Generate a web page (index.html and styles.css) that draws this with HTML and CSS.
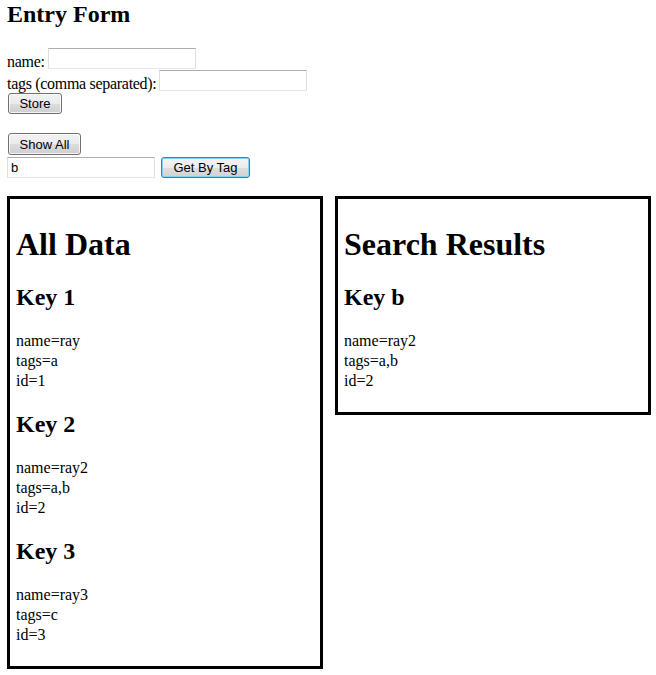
FILE: index.html
```html
<!DOCTYPE html>
<html>
<head>
<meta charset="utf-8">
<title>Entry Form</title>
<link rel="stylesheet" href="styles.css">
</head>
<body>
<h2 class="title">Entry Form</h2>
<div class="form">
  <div class="row"><span class="label">name:</span><input class="field" type="text"></div>
  <div class="row"><span class="label">tags (comma separated):</span><input class="field" type="text"></div>
  <button class="btn btn-store" type="button">Store</button>
</div>
<div class="search">
  <button class="btn btn-all" type="button">Show All</button>
  <div class="search-row">
    <input class="field" type="text" value="b">
    <button class="btn btn-tag" type="button">Get By Tag</button>
  </div>
</div>
<div class="boxes">
  <div class="box">
    <h1>All Data</h1>
    <h2>Key 1</h2>
    <p class="rec">name=ray<br>tags=a<br>id=1</p>
    <h2>Key 2</h2>
    <p class="rec">name=ray2<br>tags=a,b<br>id=2</p>
    <h2>Key 3</h2>
    <p class="rec">name=ray3<br>tags=c<br>id=3</p>
  </div>
  <div class="box">
    <h1>Search Results</h1>
    <h2>Key b</h2>
    <p class="rec">name=ray2<br>tags=a,b<br>id=2</p>
  </div>
</div>
</body>
</html>
```
FILE: styles.css
```css
html, body {
  background: #ffffff;
}
body {
  margin: 0;
  padding: 0 7px;
  font-family: "Liberation Serif", "Times New Roman", serif;
  font-size: 16px;
  color: #000;
}
.title {
  font-size: 24px;
  font-weight: bold;
  margin: 0 0 20px;
  line-height: 28px;
}
.row {
  display: flex;
  align-items: flex-start;
  gap: 3px;
  height: 22px;
}
.label {
  line-height: 20px;
  margin-top: 4px;
  white-space: nowrap;
  letter-spacing: -0.3px;
}
.field {
  box-sizing: border-box;
  width: 148px;
  height: 21px;
  margin: 0;
  padding: 1px 3px;
  border: 1px solid #dbdfe6;
  border-top-color: #abadb3;
  border-bottom-color: #e3e9ef;
  border-radius: 0;
  font-family: "Liberation Sans", Arial, sans-serif;
  font-size: 13px;
  color: #000;
  background: #fff;
  outline: none;
  flex: none;
}
.btn {
  box-sizing: border-box;
  height: 21px;
  margin: 0 0 0 1px;
  padding: 0;
  border: 1px solid #707070;
  border-radius: 3px;
  background: linear-gradient(to bottom, #f2f2f2 0%, #ebebeb 50%, #dddddd 51%, #cfcfcf 100%);
  box-shadow: inset 0 0 0 1px rgba(255,255,255,0.75);
  font-family: "Liberation Sans", Arial, sans-serif;
  font-size: 13px;
  line-height: 17px;
  color: #000;
  display: block;
  flex: none;
}
.btn-store {
  width: 54px;
  margin-top: 1px;
}
.search {
  margin-top: 19px;
}
.btn-all {
  width: 73px;
  height: 22px;
}
.search-row {
  display: flex;
  align-items: flex-start;
  gap: 6px;
  margin-top: 2px;
}
.btn-tag {
  width: 89px;
  margin-left: 0;
  border-color: #3c7fb1;
  box-shadow: inset 0 0 0 1px #7fd3f5;
  background: linear-gradient(to bottom, #f4f4f4 0%, #ececec 50%, #dedede 51%, #d2d2d2 100%);
}
.boxes {
  display: flex;
  align-items: flex-start;
  gap: 12px;
  margin-top: 18px;
}
.box {
  box-sizing: border-box;
  flex: none;
  width: 316px;
  border: 3px solid #000;
  padding: 6px 6px 5px;
}
.box h1 {
  font-size: 32px;
  font-weight: bold;
  margin: 21px 0;
}
.box h2 {
  font-size: 24px;
  font-weight: bold;
  margin: 20px 0;
}
.rec {
  margin: 16px 0;
  line-height: 20px;
}
```
